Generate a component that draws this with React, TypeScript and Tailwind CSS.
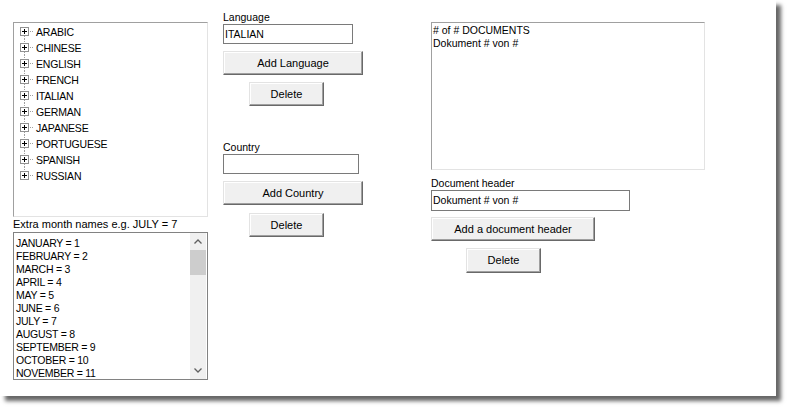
import React from "react";

const langs = ["ARABIC","CHINESE","ENGLISH","FRENCH","ITALIAN","GERMAN","JAPANESE","PORTUGUESE","SPANISH","RUSSIAN"];
const months = ["JANUARY = 1","FEBRUARY = 2","MARCH = 3","APRIL = 4","MAY = 5","JUNE = 6","JULY = 7","AUGUST = 8","SEPTEMBER = 9","OCTOBER = 10","NOVEMBER = 11"];

function TreeGlyph({ first, last }: { first: boolean; last: boolean }) {
  return (
    <svg width="15" height="16" viewBox="0 0 15 16" className="shrink-0" shapeRendering="crispEdges">
      {!first && <line x1="4.5" y1="0" x2="4.5" y2="4" stroke="#a0a0a0" strokeDasharray="1 1" />}
      {!last && <line x1="4.5" y1="13" x2="4.5" y2="16" stroke="#a0a0a0" strokeDasharray="1 1" />}
      <rect x="0.5" y="4.5" width="8" height="8" fill="#fff" stroke="#919191" />
      <line x1="2" y1="8.5" x2="7" y2="8.5" stroke="#000" />
      <line x1="4.5" y1="6" x2="4.5" y2="11" stroke="#000" />
      <line x1="10" y1="8.5" x2="14" y2="8.5" stroke="#a0a0a0" strokeDasharray="1 1" />
    </svg>
  );
}

function Btn({ label, className }: { label: string; className: string }) {
  return (
    <div
      className={
        "flex items-center justify-center bg-[#f0f0f0] border border-t-[#e3e3e3] border-l-[#e3e3e3] border-r-[#696969] border-b-[#696969] shadow-[inset_-1px_-1px_0_#a0a0a0,inset_1px_1px_0_#ffffff] text-[11px] text-black " +
        className
      }
    >
      {label}
    </div>
  );
}

export default function App() {
  return (
    <div
      className="w-[790px] h-[410px] bg-white overflow-hidden text-black"
      style={{ fontFamily: '"Liberation Sans", Arial, sans-serif' }}
    >
      <div className="w-[776px] h-[396px] bg-white shadow-[5px_5px_4px_rgba(0,0,0,0.6)] flex pl-[13px] pt-[11px]">
        {/* Left column */}
        <div className="w-[195px] flex flex-col">
          <div className="mt-[11px] h-[195px] border border-t-[#a0a0a0] border-l-[#a0a0a0] border-r-[#e3e3e3] border-b-[#e3e3e3] bg-white">
            <div className="pl-[6px]">
              {langs.map((l, i) => (
                <div key={l} className="h-[16px] flex items-center">
                  <TreeGlyph first={i === 0} last={i === langs.length - 1} />
                  <span className="text-[10.5px] leading-[16px] ml-[1px] tracking-[-0.2px] translate-y-[1px]">{l}</span>
                </div>
              ))}
            </div>
          </div>
          <div className="h-[15px] text-[11px] leading-[15px] whitespace-nowrap">Extra month names e.g. JULY = 7</div>
          <div className="h-[148px] border border-[#828282] bg-white flex">
            <div className="flex-1 pt-[4px] pl-[2px]">
              {months.map((m) => (
                <div key={m} className="h-[13px] text-[10.5px] leading-[13px] tracking-[-0.25px] whitespace-nowrap">{m}</div>
              ))}
            </div>
            <div className="w-[16px] mr-[1px] bg-[#f0f0f0] flex flex-col">
              <div className="h-[17px] flex items-center justify-center">
                <svg width="8" height="5" viewBox="0 0 8 5"><path d="M0.5 4.5 L4 1 L7.5 4.5" fill="none" stroke="#606060" strokeWidth="1.3" /></svg>
              </div>
              <div className="h-[25px] bg-[#cdcdcd]" />
              <div className="flex-1" />
              <div className="h-[17px] flex items-center justify-center">
                <svg width="8" height="5" viewBox="0 0 8 5"><path d="M0.5 0.5 L4 4 L7.5 0.5" fill="none" stroke="#606060" strokeWidth="1.3" /></svg>
              </div>
            </div>
          </div>
        </div>

        {/* Middle column */}
        <div className="ml-[15px] w-[140px] flex flex-col">
          <div className="h-[13px] text-[10.5px] leading-[13px]">Language</div>
          <div className="h-[20px] w-[130px] border border-[#7a7a7a] flex items-center pl-[1px] pt-[1px] text-[10.5px]">ITALIAN</div>
          <Btn label="Add Language" className="mt-[7px] h-[24px] w-[140px]" />
          <Btn label="Delete" className="mt-[7px] h-[24px] w-[75px] ml-[26px]" />
          <div className="mt-[35px] h-[13px] text-[10.5px] leading-[13px]">Country</div>
          <div className="h-[20px] w-[136px] border border-[#7a7a7a]" />
          <Btn label="Add Country" className="mt-[7px] h-[24px] w-[140px]" />
          <Btn label="Delete" className="mt-[8px] h-[24px] w-[75px] ml-[26px]" />
        </div>

        {/* Right column */}
        <div className="ml-[68px] w-[274px] flex flex-col">
          <div className="mt-[11px] h-[148px] border border-t-[#a0a0a0] border-l-[#a0a0a0] border-r-[#e3e3e3] border-b-[#e3e3e3] pl-[1px] pt-[1px] text-[10.5px] leading-[13px]">
            <div># of # DOCUMENTS</div>
            <div>Dokument # von #</div>
          </div>
          <div className="mt-[6px] h-[14px] text-[10.5px] leading-[14px]">Document header</div>
          <div className="h-[21px] w-[199px] border border-[#7a7a7a] flex items-center pl-[1px] text-[10.5px]">Dokument # von #</div>
          <Btn label="Add a document header" className="mt-[6px] h-[24px] w-[164px]" />
          <Btn label="Delete" className="mt-[7px] h-[25px] w-[75px] ml-[35px]" />
        </div>
      </div>
    </div>
  );
}
